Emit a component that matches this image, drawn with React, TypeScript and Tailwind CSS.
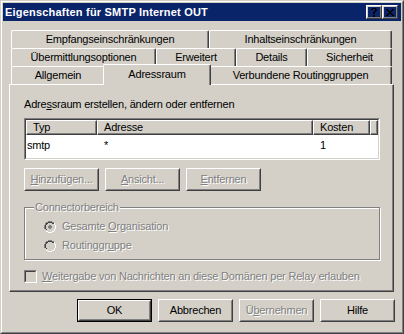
import React from "react";

const dis = "text-[#808080] [text-shadow:1px_1px_0_#ffffff]";

function U({ children }: { children: React.ReactNode }) {
  return <span className="underline decoration-1 underline-offset-[1px]">{children}</span>;
}

function Raised({ children, className = "" }: { children: React.ReactNode; className?: string }) {
  return (
    <div className={"h-full w-full border border-t-white border-l-white border-r-[#404040] border-b-[#404040] " + className}>
      <div className="h-full w-full border border-t-[#D4D0C8] border-l-[#D4D0C8] border-r-[#808080] border-b-[#808080] flex items-center justify-center">
        {children}
      </div>
    </div>
  );
}

function Btn({ children, disabled, def }: { children: React.ReactNode; disabled?: boolean; def?: boolean }) {
  const inner = (
    <Raised>
      <span className={disabled ? dis : "text-black"}>{children}</span>
    </Raised>
  );
  return def ? (
    <div className="w-[75px] h-[23px] border border-black shrink-0">{inner}</div>
  ) : (
    <div className="w-[75px] h-[23px] shrink-0">{inner}</div>
  );
}

function Tab({ w, children }: { w: string; children: React.ReactNode }) {
  return (
    <div
      className={
        w +
        " h-[18px] shrink-0 border-t border-l border-r border-t-white border-l-white border-r-[#404040] rounded-t-[2px] shadow-[inset_-1px_0_0_#808080] flex items-center justify-center"
      }
    >
      {children}
    </div>
  );
}

function HeadCell({ w, children }: { w: string; children?: React.ReactNode }) {
  return (
    <div
      className={
        w +
        " h-full shrink-0 bg-[#D4D0C8] border-t border-l border-r border-b border-t-white border-l-white border-r-[#404040] border-b-[#404040] shadow-[inset_-1px_-1px_0_#808080] flex items-center pl-[6px]"
      }
    >
      {children}
    </div>
  );
}

function Radio({ checked }: { checked?: boolean }) {
  return (
    <svg width="12" height="12" viewBox="0 0 12 12" className="shrink-0" shapeRendering="crispEdges">
      <path d="M4 0h4v1H4zM2 1h2v1H2zM8 1h2v1H8zM1 2h1v2H1zM0 4h1v4H0z" fill="#808080" />
      <path d="M4 1h4v1H4zM2 2h2v1H2zM8 2h2v1H8zM2 3h1v1H2zM1 4h1v4H1zM2 8h1v1H2z" fill="#404040" />
      <path d="M11 4h1v4h-1zM10 8h1v2h-1zM8 10h2v1H8zM4 11h4v1H4zM2 10h2v1H2zM10 2h1v2h-1z" fill="#ffffff" />
      <path d="M10 4h1v4h-1zM9 8h1v1H9zM8 9h2v1H8zM4 10h4v1H4zM2 9h2v1H2zM9 3h1v1H9z" fill="#D4D0C8" />
      <path d="M4 2h4v1H4zM3 3h6v1H3zM2 4h8v4H2zM3 8h6v1H3zM4 9h4v1H4z" fill="#D4D0C8" />
      {checked && <path d="M5 4h2v1H5zM4 5h4v2H4zM5 7h2v1H5z" fill="#808080" />}
    </svg>
  );
}

function Check() {
  return (
    <div className="w-[13px] h-[13px] shrink-0 border border-t-[#808080] border-l-[#808080] border-r-white border-b-white">
      <div className="h-full w-full border border-t-[#404040] border-l-[#404040] border-r-[#D4D0C8] border-b-[#D4D0C8] bg-[#D4D0C8]" />
    </div>
  );
}

export default function App() {
  return (
    <div className="w-[404px] h-[334px] bg-[#D4D0C8] text-[11px] leading-[13px] tracking-[-0.2px] text-black [font-family:'Liberation_Sans',Arial,sans-serif] border border-t-[#D4D0C8] border-l-[#D4D0C8] border-r-[#404040] border-b-[#404040] select-none">
      <div className="h-full border border-t-white border-l-white border-r-[#808080] border-b-[#808080] p-px flex flex-col">
        {/* Title bar */}
        <div className="h-[18px] shrink-0 bg-[#0A246A] flex items-center pl-[2px] pr-[3px]">
          <span className="text-white font-bold text-[11px] tracking-[0.2px] flex-1">Eigenschaften für SMTP Internet OUT</span>
          <div className="w-[16px] h-[14px] shrink-0">
            <Raised>
              <svg width="6" height="9" viewBox="0 0 6 9" shapeRendering="crispEdges">
                <path d="M1 0h4v1H1zM0 1h2v1H0zM4 1h2v2H4zM3 3h2v1H3zM2 4h2v2H2zM2 7h2v2H2z" fill="#000" />
              </svg>
            </Raised>
          </div>
          <div className="w-[16px] h-[14px] shrink-0">
            <Raised>
              <svg width="8" height="7" viewBox="0 0 8 7" shapeRendering="crispEdges">
                <path
                  d="M0 0h2v1H0zM6 0h2v1H6zM1 1h2v1H1zM5 1h2v1H5zM2 2h4v1H2zM3 3h2v1H3zM2 4h4v1H2zM1 5h2v1H1zM5 5h2v1H5zM0 6h2v1H0zM6 6h2v1H6z"
                  fill="#000"
                />
              </svg>
            </Raised>
          </div>
        </div>

        {/* Client */}
        <div className="flex-1 pt-[9px] pl-[6px] flex flex-col">
          {/* Tabs */}
          <div className="ml-[2px] w-[381px] flex flex-col">
            <div className="flex">
              <Tab w="w-[198px]">Empfangseinschränkungen</Tab>
              <Tab w="w-[183px]">Inhaltseinschränkungen</Tab>
            </div>
            <div className="flex">
              <Tab w="w-[145px]">Übermittlungsoptionen</Tab>
              <Tab w="w-[80px]">Erweitert</Tab>
              <Tab w="w-[71px]">Details</Tab>
              <Tab w="w-[85px]">Sicherheit</Tab>
            </div>
            <div className="flex h-[18px] items-start">
              <Tab w="w-[94px]">Allgemein</Tab>
              <div className="relative z-10 w-[108px] -mx-[2px] -mt-[2px] h-[21px] shrink-0 bg-[#D4D0C8] border-t border-l border-r border-t-white border-l-white border-r-[#404040] rounded-t-[2px] shadow-[inset_-1px_0_0_#808080] flex items-center justify-center pb-[2px]">
                Adressraum
              </div>
              <Tab w="w-[183px]">Verbundene Routinggruppen</Tab>
            </div>
          </div>

          {/* Panel */}
          <div className="w-[385px] h-[208px] shrink-0 border border-t-white border-l-white border-r-[#404040] border-b-[#404040] shadow-[inset_-1px_-1px_0_#808080] pl-[14px] pt-[13px] flex flex-col">
            <div>
              Adre<U>s</U>sraum erstellen, ändern oder entfernen
            </div>

            {/* List view */}
            <div className="w-[356px] h-[42px] mt-[7px] shrink-0 border border-t-[#808080] border-l-[#808080] border-r-white border-b-white">
              <div className="h-full border border-t-[#404040] border-l-[#404040] border-r-[#D4D0C8] border-b-[#D4D0C8] bg-white flex flex-col">
                <div className="flex h-[15px] shrink-0">
                  <HeadCell w="w-[71px]">Typ</HeadCell>
                  <HeadCell w="w-[216px]">Adresse</HeadCell>
                  <HeadCell w="w-[57px]">Kosten</HeadCell>
                  <HeadCell w="w-[8px]" />
                </div>
                <div className="flex h-[18px] items-center pt-[3px]">
                  <div className="w-[71px] pl-[1px]">smtp</div>
                  <div className="w-[216px] pl-[7px]">*</div>
                  <div className="w-[57px] pl-[7px]">1</div>
                </div>
              </div>
            </div>

            {/* Buttons */}
            <div className="flex gap-[6px] mt-[8px]">
              <Btn disabled>
                <U>H</U>inzufügen...
              </Btn>
              <Btn disabled>
                <U>A</U>nsicht...
              </Btn>
              <Btn disabled>
                <U>E</U>ntfernen
              </Btn>
            </div>

            {/* Group box */}
            <fieldset className="w-[356px] mt-[10px] border border-[#808080] shadow-[inset_1px_1px_0_#ffffff,1px_1px_0_#ffffff] pb-[4px]">
              <legend className={"ml-[9px] px-[1px] bg-[#D4D0C8] " + dis}>Connectorbereich</legend>
              <div className="flex flex-col pl-[19px] pt-[3px]">
                <div className="flex items-center h-[19px] gap-[6px]">
                  <Radio checked />
                  <span className={dis}>
                    Gesamte <U>O</U>rganisation
                  </span>
                </div>
                <div className="flex items-center h-[19px] gap-[6px]">
                  <Radio />
                  <span className={dis}>
                    Routinggr<U>u</U>ppe
                  </span>
                </div>
              </div>
            </fieldset>

            <div className="flex items-center gap-[5px] mt-[10px]">
              <Check />
              <span className={dis}>
                <U>W</U>eitergabe von Nachrichten an diese Domänen per Relay erlauben
              </span>
            </div>
          </div>

          {/* Dialog buttons */}
          <div className="w-[386px] flex justify-end gap-[6px] mt-[7px]">
            <Btn def>OK</Btn>
            <Btn>Abbrechen</Btn>
            <Btn disabled>
              Ü<U>b</U>ernehmen
            </Btn>
            <Btn>Hilfe</Btn>
          </div>
        </div>
      </div>
    </div>
  );
}
